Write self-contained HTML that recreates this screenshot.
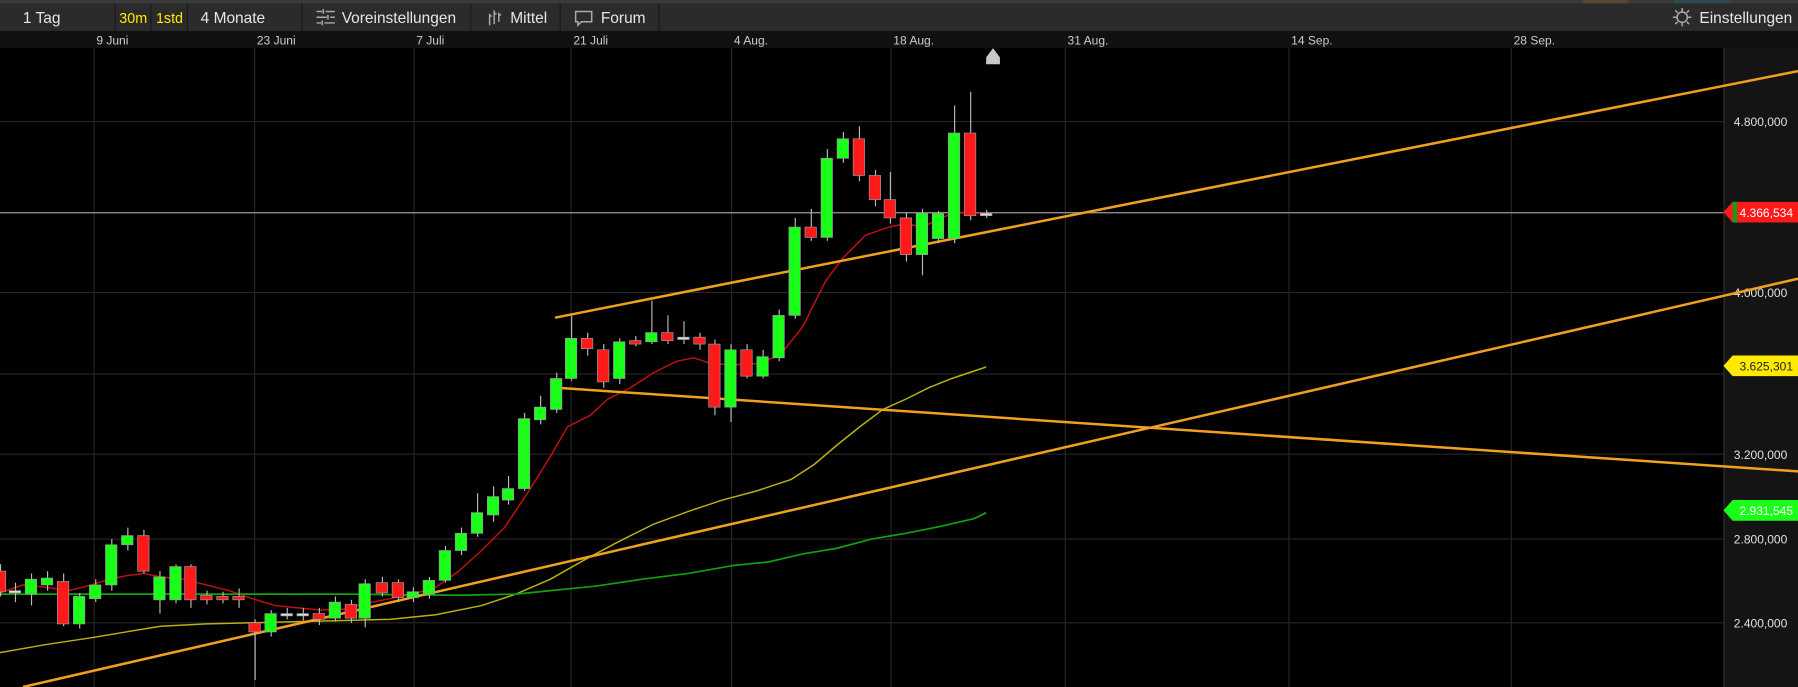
<!DOCTYPE html>
<html><head><meta charset="utf-8"><style>
html,body{margin:0;padding:0;background:#000;overflow:hidden}
svg{display:block}
text{font-family:"Liberation Sans",sans-serif}
</style></head><body>
<svg id="s" width="1798" height="687" viewBox="0 0 1568 599" preserveAspectRatio="none" xmlns="http://www.w3.org/2000/svg">
<rect x="0" y="0" width="1568" height="599" fill="#000"/>
<!-- top strip -->
<rect x="0" y="0" width="1568" height="3" fill="#3a3a3a"/>
<rect x="1380" y="0" width="40" height="3" fill="#5a4630"/>
<rect x="1460" y="0" width="50" height="3" fill="#2e4a4e"/>
<!-- toolbar -->
<rect x="0" y="3" width="1568" height="24" fill="#2b2b2b"/>
<g fill="#1a1a1a">
<rect x="100" y="3" width="1" height="24"/><rect x="131" y="3" width="1" height="24"/><rect x="163" y="3" width="1" height="24"/>
<rect x="263" y="3" width="1" height="24"/><rect x="410" y="3" width="1" height="24"/><rect x="488" y="3" width="1" height="24"/><rect x="574" y="3" width="1" height="24"/>
</g>
<g font-size="13.5" fill="#e6e6e6">
<text x="20" y="20">1 Tag</text>
<text x="104" y="20" fill="#ffea00" font-size="12.5">30m</text>
<text x="136" y="20" fill="#ffea00" font-size="12.5">1std</text>
<text x="175" y="20">4 Monate</text>
<text x="298" y="20">Voreinstellungen</text>
<text x="445" y="20">Mittel</text>
<text x="524" y="20">Forum</text>
<text x="1482" y="20">Einstellungen</text>
</g>
<g stroke="#aaa" stroke-width="1.3" fill="none">
<path d="M276 10h5M284 10h8M276 15h9M288 15h4M276 20h4M283 20h9M282 8v4M286 13v4M281 18v4"/>
<path d="M427 12v10M431 9v12M435 11v8M427 14h2M431 12h2M435 13h2"/>
<path d="M502 10h14v9h-9l-3 3v-3h-2z"/>
<circle cx="1467" cy="15" r="4.5"/>
<path d="M1467 7v3M1467 20v3M1459 15h3M1472 15h3M1461 9l2 2M1471 19l2 2M1461 21l2-2M1471 11l2-2"/>
</g>
<!-- date axis -->
<rect x="0" y="27" width="1568" height="15" fill="#111"/>
<g font-size="10.5" fill="#ccc">
<text x="84" y="39">9 Juni</text><text x="224" y="39">23 Juni</text><text x="363" y="39">7 Juli</text>
<text x="500" y="39">21 Juli</text><text x="640" y="39">4 Aug.</text><text x="779" y="39">18 Aug.</text>
<text x="931" y="39">31 Aug.</text><text x="1126" y="39">14 Sep.</text><text x="1320" y="39">28 Sep.</text>
</g>
<!-- right axis -->
<rect x="1503" y="42" width="65" height="557" fill="#141414"/>
<rect x="1503" y="42" width="1" height="557" fill="#333"/>
<!-- grid -->
<g stroke="#262626" stroke-width="1">
<path d="M82 42V599M222 42V599M361 42V599M498 42V599M638 42V599M777 42V599M929 42V599M1124 42V599M1318 42V599"/>
<path d="M0 106H1503M0 255H1503M0 326H1503M0 396H1503M0 470H1503M0 543H1503"/>
</g>
<g font-size="10.5" fill="#e0e0e0">
<text x="1512" y="110">4.800,000</text><text x="1512" y="259">4.000,000</text>
<text x="1512" y="400">3.200,000</text><text x="1512" y="474">2.800,000</text><text x="1512" y="547">2.400,000</text>
</g>
<!-- current price line -->
<path d="M0 185.5H1503" stroke="#999" stroke-width="1"/>
<path d="M866 42l6 8v6h-12v-6z" fill="#c8c8c8"/>
<!-- MAs -->
<path d="M0 517 L20 510 L40 512 L60 515 L80 510 L95 505 L110 502 L125 500 L140 503 L160 505 L180 510 L200 515 L220 522 L240 528 L260 530 L280 532 L300 531 L320 526 L340 522 L360 518 L380 512 L400 498 L420 480 L440 460 L460 430 L480 398 L495 372 L515 362 L530 348 L550 338 L570 325 L590 315 L605 312 L620 317 L640 318 L660 317 L680 310 L700 285 L720 245 L735 225 L755 205 L775 198 L790 195 L805 198 L820 190 L835 185 L850 186 L860 186" stroke="#c01010" stroke-width="1.3" fill="none"/>
<path d="M0 569 L40 562 L80 556 L110 551 L140 546 L180 544 L220 543 L260 542 L300 541 L340 540 L380 536 L420 528 L450 518 L480 505 L510 488 L540 472 L570 457 L600 446 L630 436 L660 428 L690 418 L710 405 L730 388 L750 372 L770 357 L790 348 L810 338 L830 330 L845 325 L860 320" stroke="#b8b010" stroke-width="1.3" fill="none"/>
<path d="M0 518 L100 518 L200 518 L300 518 L400 519 L450 518 L480 515 L520 511 L560 505 L600 500 L640 493 L670 490 L700 483 L730 478 L760 470 L790 465 L820 459 L850 452 L860 447" stroke="#10a010" stroke-width="1.5" fill="none"/>
<!-- trend lines -->
<g stroke="#f0a020" stroke-width="2.2" fill="none">
<path d="M484 277L1568 62"/>
<path d="M484 338L1568 411"/>
<path d="M20 599L1568 243"/>
</g>
<g id="c"></g>
<!-- tags -->
<path d="M1503 185l8-9h57v18h-57z" fill="#ff1a1a"/>
<path d="M1511 176h4v18h-4z" fill="#1a9a1a"/>
<text x="1517" y="189" font-size="10.5" fill="#fff">4.366,534</text>
<path d="M1503 319l8-9h57v18h-57z" fill="#ffea00"/>
<text x="1517" y="323" font-size="10.5" fill="#222">3.625,301</text>
<path d="M1503 445l8-9h57v18h-57z" fill="#1aff1a"/>
<text x="1517" y="449" font-size="10.5" fill="#fff">2.931,545</text>
</svg>
<script>
var d=[[0,498,516,492,520],[13,515,517,508,525],[27,518,505,500,528],[41,510,504,498,515],[55,507,544,500,546],[69,544,520,517,548],[83,522,510,505,525],[97,510,475,470,515],[111,475,467,460,480],[125,467,498,462,500],[139,523,503,498,535],[153,523,494,492,526],[166,494,523,492,530],[180,519,523,515,527],[194,520,523,516,526],[208,520,523,513,530],[222,543,551,540,593],[236,551,535,532,555],[250,535,536,530,540],[264,535,536,530,541],[278,535,540,530,545],[292,539,525,520,542],[306,527,539,523,543],[318,539,509,505,547],[333,508,517,503,520],[347,508,521,505,525],[360,521,516,512,525],[374,518,506,503,522],[388,506,480,476,508],[402,480,465,460,484],[416,465,447,430,468],[430,449,433,424,455],[443,436,426,415,440],[457,426,365,360,428],[471,366,355,345,370],[485,357,330,325,360],[498,330,295,275,332],[512,295,304,290,310],[526,305,333,300,338],[540,330,298,295,335],[554,297,300,293,302],[568,298,290,262,300],[582,290,297,275,300],[596,294,295,280,300],[610,294,300,290,305],[623,300,355,296,362],[637,355,305,300,368],[651,305,328,300,330],[665,328,311,305,330],[679,312,275,270,315],[693,275,198,190,278],[707,198,207,182,210],[721,207,138,130,210],[735,138,121,115,142],[749,121,153,110,158],[763,153,174,148,180],[776,174,190,150,195],[790,190,222,185,228],[804,222,186,182,240],[818,208,186,184,212],[832,208,116,92,212],[846,116,188,80,192],[860,186,187,183,190]];
var g=document.getElementById('c'),h='';
d.forEach(function(c){var x=c[0],o=c[1],cl=c[2],up=cl<o,t=Math.min(o,cl),b=Math.max(o,cl),hh=Math.max(b-t,2);
h+='<path d="M'+(x+.5)+' '+c[3]+'V'+c[4]+'" stroke="#bbb" stroke-width="1"/>';
h+='<rect x="'+(x-5)+'" y="'+t+'" width="10" height="'+hh+'" fill="'+(b-t<3?'#ddd':(up?'#1aff1a':'#ff1a1a'))+'" stroke="#999" stroke-width="0.6"/>';});
g.innerHTML=h;
</script>
</body></html>
